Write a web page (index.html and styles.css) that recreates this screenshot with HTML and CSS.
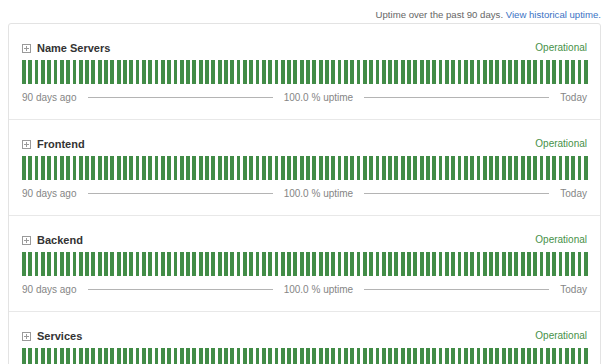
FILE: index.html
```html
<!DOCTYPE html>
<html>
    <head>
        <meta charset="UTF-8">
        <title>Status</title>
        <link rel="stylesheet" href="styles.css">
    </head>
    <body>
        <div class="page">
            <div class="uptimeNote">
                Uptime over the past 90 days. <a href="#">View historical uptime.</a>
            </div>
            <div class="components">
                <div class="component">
                    <div class="compHead">
                        <span class="compName">
                            <svg class="expand" width="9" height="9" viewBox="0 0 9 9">
                                <rect x="0.5" y="0.5" width="8" height="8" fill="none" stroke="#9a9a9a"/>
                                <path d="M2 4.5h5M4.5 2v5" stroke="#9a9a9a"/>
                            </svg>
                            Name Servers
                        </span>
                        <span class="compStatus">Operational</span>
                    </div>
                    <div class="bars"></div>
                    <div class="legend">
                        <span>90 days ago</span><span class="spacer"></span>
                        <span>100.0 % uptime</span><span class="spacer"></span>
                        <span>Today</span>
                    </div>
                </div>
                <div class="component">
                    <div class="compHead">
                        <span class="compName">
                            <svg class="expand" width="9" height="9" viewBox="0 0 9 9">
                                <rect x="0.5" y="0.5" width="8" height="8" fill="none" stroke="#9a9a9a"/>
                                <path d="M2 4.5h5M4.5 2v5" stroke="#9a9a9a"/>
                            </svg>
                            Frontend
                        </span>
                        <span class="compStatus">Operational</span>
                    </div>
                    <div class="bars"></div>
                    <div class="legend">
                        <span>90 days ago</span><span class="spacer"></span>
                        <span>100.0 % uptime</span><span class="spacer"></span>
                        <span>Today</span>
                    </div>
                </div>
                <div class="component">
                    <div class="compHead">
                        <span class="compName">
                            <svg class="expand" width="9" height="9" viewBox="0 0 9 9">
                                <rect x="0.5" y="0.5" width="8" height="8" fill="none" stroke="#9a9a9a"/>
                                <path d="M2 4.5h5M4.5 2v5" stroke="#9a9a9a"/>
                            </svg>
                            Backend
                        </span>
                        <span class="compStatus">Operational</span>
                    </div>
                    <div class="bars"></div>
                    <div class="legend">
                        <span>90 days ago</span><span class="spacer"></span>
                        <span>100.0 % uptime</span><span class="spacer"></span>
                        <span>Today</span>
                    </div>
                </div>
                <div class="component">
                    <div class="compHead">
                        <span class="compName">
                            <svg class="expand" width="9" height="9" viewBox="0 0 9 9">
                                <rect x="0.5" y="0.5" width="8" height="8" fill="none" stroke="#9a9a9a"/>
                                <path d="M2 4.5h5M4.5 2v5" stroke="#9a9a9a"/>
                            </svg>
                            Services
                        </span>
                        <span class="compStatus">Operational</span>
                    </div>
                    <div class="bars"></div>
                    <div class="legend">
                        <span>90 days ago</span><span class="spacer"></span>
                        <span>100.0 % uptime</span><span class="spacer"></span>
                        <span>Today</span>
                    </div>
                </div>
            </div>
        </div>

        <script src="index.js" type="text/javascript" charset="utf-8"></script>
    </body>
</html>
```

FILE: styles.css
```css
* {
    box-sizing: border-box;
    font-family: 'Liberation Sans', Arial, sans-serif; }

html, body {
    background: #fff; color: #333;
    margin: 0; padding: 0; }

.page { padding: 0 8px; }

.uptimeNote {
    text-align: right;
    font-size: 9.6px;
    line-height: 14px;
    color: #666;
    padding-top: 8px;
    margin-bottom: 1px; }
.uptimeNote a { color: #3b72c4; text-decoration: none; }

.components {
    border: 1px solid #e3e3e3;
    border-radius: 3px; }

.component {
    padding: 16px 13px 15px 13px; }
.component + .component { border-top: 1px solid #e8e8e8; }

.compHead {
    display: flex;
    justify-content: space-between;
    align-items: center;
    height: 16px; }
.compName {
    display: flex;
    align-items: center;
    gap: 6px;
    font-size: 11px;
    font-weight: bold;
    color: #333; }
.expand { display: block; }
.compStatus {
    font-size: 10px;
    color: #479148;
    margin-top: -2px; }

.bars {
    display: flex;
    gap: 2.5px;
    height: 24px;
    margin-top: 4px; }
.bars > span {
    flex: 1;
    background: #428c47; }

.legend {
    display: flex;
    align-items: center;
    margin-top: 6px;
    height: 14px;
    font-size: 10px;
    color: #858585; }
.spacer {
    flex: 1;
    height: 1px;
    background: #b4b4b4;
    margin: 0 11px; }
```

FILE: index.js
```js
// 90 daily uptime bars per component
document.querySelectorAll('.bars').forEach(function (row) {
    for (var i = 0; i < 90; i++) {
        row.appendChild(document.createElement('span'));
    }
});
```
